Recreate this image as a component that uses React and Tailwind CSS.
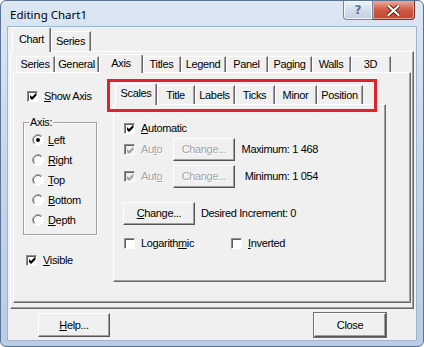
import React from 'react';

const UI = "font-['Liberation_Sans',Arial,sans-serif] text-[11px] tracking-[-0.35px] leading-[13px] text-black";

function Check({ checked = false, disabled = false }) {
  return (
    <span
      className={`flex h-[11px] w-[11px] shrink-0 items-center justify-center border border-t-[#8d8d8d] border-l-[#8d8d8d] border-r-white border-b-white shadow-[inset_1px_1px_0_#5f5f5f] ${disabled ? 'bg-[#f0f0f0]' : 'bg-white'}`}
    >
      {checked && (
        <svg width="7" height="7" viewBox="0 0 7 7" className="ml-[1px] mt-[1px]">
          <polygon points="0,2 2,4 6.5,-0.5 6.5,2.5 2,7 0,5" fill={disabled ? '#a0a0a0' : '#000'} />
        </svg>
      )}
    </span>
  );
}

function Radio({ checked = false }) {
  return (
    <svg width="12" height="12" viewBox="0 0 12 12" className="shrink-0">
      <circle cx="6" cy="6" r="5" fill="#fff" />
      <path d="M2.1 9.9A5.5 5.5 0 0 1 9.9 2.1" fill="none" stroke="#a0a0a0" />
      <path d="M2.8 9.2A4.5 4.5 0 0 1 9.2 2.8" fill="none" stroke="#696969" />
      <path d="M2.1 9.9A5.5 5.5 0 0 0 9.9 2.1" fill="none" stroke="#fff" />
      {checked && <circle cx="6" cy="6" r="2" fill="#000" />}
    </svg>
  );
}

function Btn({ children, className = '', disabled = false }) {
  return (
    <div
      className={`flex shrink-0 items-center justify-center border border-t-white border-l-white border-r-[#555] border-b-[#555] bg-[#f0f0f0] shadow-[inset_-1px_-1px_0_#a0a0a0] ${disabled ? 'text-[#a3a3a3] [text-shadow:1px_1px_0_#fff]' : ''} ${className}`}
    >
      {children}
    </div>
  );
}

function Tab({ label, className, selected = false }) {
  return selected ? (
    <div
      className={`relative z-10 -mb-px flex shrink-0 items-center justify-center rounded-t-[2px] border-t border-l border-r border-t-white border-l-white border-r-[#696969] bg-[#f0f0f0] pb-[2px] shadow-[inset_-1px_0_0_#a0a0a0] ${className}`}
    >
      {label}
    </div>
  ) : (
    <div
      className={`flex shrink-0 items-center justify-center border-t border-r border-t-white border-r-[#696969] shadow-[inset_-1px_0_0_#a0a0a0,inset_1px_0_0_#fff] ${className}`}
    >
      {label}
    </div>
  );
}

const panel =
  'border border-t-white border-l-white border-r-[#696969] border-b-[#696969] shadow-[inset_-1px_-1px_0_#a0a0a0]';

export default function App() {
  return (
    <div className={`${UI} flex h-[347px] w-[424px] flex-col overflow-hidden rounded-[6px] border border-[#5b7494] bg-gradient-to-b from-[#dce7f3] via-[#c4d6ea] to-[#b8cde5]`}>
      {/* title bar */}
      <div className="flex h-[26px] shrink-0 items-start justify-between pl-[9px] pr-[8px]">
        <span className="pt-[6px] font-['Noto_Sans',sans-serif] text-[11.5px] leading-[16px] tracking-normal text-black">
          Editing Chart1
        </span>
        <div className="flex">
          <div className="flex h-[19px] w-[30px] items-center justify-center rounded-bl-[4px] border border-t-0 border-[#7187a3] bg-gradient-to-b from-[#eef3f9] via-[#d3dfec] to-[#bfcfe2] shadow-[inset_0_0_0_1px_#f4f8fc]">
            <span className="font-['DejaVu_Sans',sans-serif] text-[12px] font-bold leading-none tracking-normal text-[#5c7190]">?</span>
          </div>
          <div className="flex h-[19px] w-[42px] items-center justify-center rounded-br-[4px] border border-l-0 border-t-0 border-[#7d2a22] bg-gradient-to-b from-[#e9a99b] via-[#cf5a45] to-[#c2452e] shadow-[inset_0_0_0_1px_#eba596]">
            <svg width="13" height="11" viewBox="0 0 13 11">
              <path d="M1.5 1 L11.5 10 M11.5 1 L1.5 10" stroke="#5b1a12" strokeWidth="4" strokeLinecap="round" />
              <path d="M1.5 1 L11.5 10 M11.5 1 L1.5 10" stroke="#fff" strokeWidth="2.2" strokeLinecap="round" />
            </svg>
          </div>
        </div>
      </div>

      {/* client area */}
      <div className="mx-[7px] flex h-[313px] shrink-0 flex-col bg-[#f0f0f0] px-[2px] shadow-[0_0_0_1px_#9fb5cf]">
        {/* outer tabs */}
        <div className="flex h-[24px] shrink-0 items-end pl-[2px]">
          <Tab label="Chart" selected className="h-[25px] w-[39px]" />
          <Tab label="Series" className="h-[20px] w-[40px]" />
        </div>

        {/* outer panel */}
        <div className={`${panel} flex h-[258px] w-[404px] shrink-0 flex-col`}>
          <div className="flex h-[20px] shrink-0 items-end pl-[5px]">
            <Tab label="Series" className="h-[16px] w-[39px]" />
            <Tab label="General" className="h-[16px] w-[44px]" />
            <Tab label="Axis" selected className="h-[19px] w-[44px]" />
            <Tab label="Titles" className="h-[16px] w-[38px]" />
            <Tab label="Legend" className="h-[16px] w-[45px]" />
            <Tab label="Panel" className="h-[16px] w-[42px]" />
            <Tab label="Paging" className="h-[16px] w-[44px]" />
            <Tab label="Walls" className="h-[16px] w-[39px]" />
            <Tab label="3D" className="h-[16px] w-[40px]" />
          </div>

          {/* axis page */}
          <div className={`${panel} ml-[2px] flex h-[231px] w-[398px] shrink-0`}>
            {/* left column */}
            <div className="flex w-[99px] shrink-0 flex-col">
              <div className="ml-[13px] mt-[17px] flex h-[12px] items-center gap-[6px]">
                <Check checked />
                <span><u>S</u>how Axis</span>
              </div>

              <div className="ml-[9px] mt-[20px] flex h-[113px] w-[74px] flex-col border border-[#a0a0a0] shadow-[inset_1px_1px_0_#fff,1px_1px_0_#fff]">
                <div className="-mt-[7px] ml-[5px] w-fit bg-[#f0f0f0] px-[1px] leading-[12px]">Axis:</div>
                <div className="mt-[2px] flex flex-col pl-[8px]">
                  {[
                    ['L', 'eft', true],
                    ['R', 'ight', false],
                    ['T', 'op', false],
                    ['B', 'ottom', false],
                    ['D', 'epth', false],
                  ].map(([a, rest, on]) => (
                    <div key={a} className="flex h-[20px] items-center gap-[4px]">
                      <Radio checked={on} />
                      <span><u>{a}</u>{rest}</span>
                    </div>
                  ))}
                </div>
              </div>

              <div className="ml-[12px] mt-[19px] flex h-[12px] items-center gap-[6px]">
                <Check checked />
                <span><u>V</u>isible</span>
              </div>
            </div>

            {/* scales page control */}
            <div className="relative mt-[10px] flex flex-col">
              <div className="flex h-[21px] shrink-0 items-end pl-[2px]">
                <Tab label="Scales" selected className="h-[22px] w-[42px]" />
                <Tab label="Title" className="h-[19px] w-[38px]" />
                <Tab label="Labels" className="h-[19px] w-[40px]" />
                <Tab label="Ticks" className="h-[19px] w-[40px]" />
                <Tab label="Minor" className="h-[19px] w-[42px]" />
                <Tab label="Position" className="h-[19px] w-[46px]" />
              </div>

              <div className={`${panel} flex h-[178px] w-[273px] shrink-0 flex-col pl-[10px]`}>
                <div className="mt-[17px] flex h-[12px] items-center gap-[6px]">
                  <Check checked />
                  <span><u>A</u>utomatic</span>
                </div>

                <div className="mt-[4px] flex h-[23px] items-center">
                  <div className="flex w-[49px] items-center gap-[6px] text-[#a3a3a3] [text-shadow:1px_1px_0_#fff]">
                    <Check checked disabled />
                    <span>Au<u>t</u>o</span>
                  </div>
                  <Btn disabled className="h-[23px] w-[62px]">Change...</Btn>
                  <span className="ml-[2px] w-[81px] whitespace-nowrap text-right">Maximum: 1 468</span>
                </div>

                <div className="mt-[4px] flex h-[23px] items-center">
                  <div className="flex w-[49px] items-center gap-[6px] text-[#a3a3a3] [text-shadow:1px_1px_0_#fff]">
                    <Check checked disabled />
                    <span>Aut<u>o</u></span>
                  </div>
                  <Btn disabled className="h-[23px] w-[62px]">Change...</Btn>
                  <span className="ml-[2px] w-[81px] whitespace-nowrap text-right">Minimum: 1 054</span>
                </div>

                <div className="-ml-[1px] mt-[14px] flex h-[23px] items-center">
                  <Btn className="h-[23px] w-[72px]"><span><u>C</u>hange...</span></Btn>
                  <span className="ml-[6px] whitespace-nowrap">Desired Increment: 0</span>
                </div>

                <div className="mt-[12px] flex h-[12px] items-center">
                  <div className="flex w-[107px] items-center gap-[6px]">
                    <Check />
                    <span>Logarith<u>m</u>ic</span>
                  </div>
                  <div className="flex items-center gap-[6px]">
                    <Check />
                    <span><u>I</u>nverted</span>
                  </div>
                </div>
              </div>

              {/* red highlight annotation */}
              <div className="absolute -left-[6px] -top-[4px] h-[33px] w-[270px] border-[3px] border-[#e3212b]" />
            </div>
          </div>
        </div>

        {/* bottom buttons */}
        <div className="mt-[4px] flex h-[24px] shrink-0 justify-between px-[28px]">
          <Btn className="h-[24px] w-[72px]"><span><u>H</u>elp...</span></Btn>
          <Btn className="h-[24px] w-[72px] outline outline-1 outline-[#707070]">Close</Btn>
        </div>
      </div>
    </div>
  );
}
